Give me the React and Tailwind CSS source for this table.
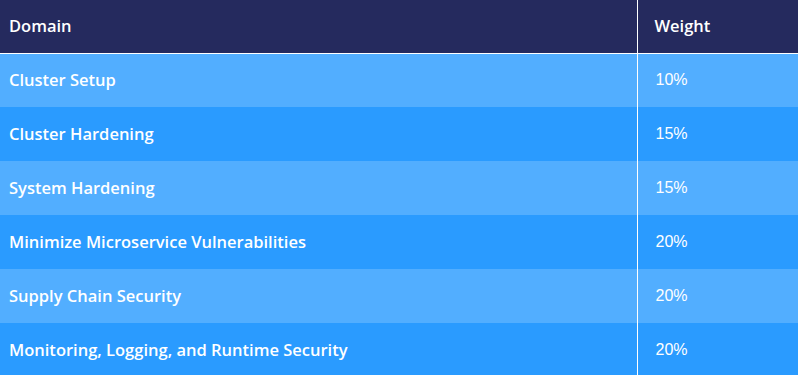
import React from "react";

const rows = [
  { domain: "Cluster Setup", weight: "10%" },
  { domain: "Cluster Hardening", weight: "15%" },
  { domain: "System Hardening", weight: "15%" },
  { domain: "Minimize Microservice Vulnerabilities", weight: "20%" },
  { domain: "Supply Chain Security", weight: "20%" },
  { domain: "Monitoring, Logging, and Runtime Security", weight: "20%" },
];

export default function App() {
  return (
    <div className="h-[375px] w-[798px] overflow-hidden bg-white font-['Open_Sans',sans-serif] text-white">
      <table className="w-full border-collapse">
        <thead>
          <tr className="h-[53px] border-b border-white bg-[#252a5e]">
            <th className="w-[637px] border-r border-white pl-[9px] text-left text-[16.5px] font-semibold">
              Domain
            </th>
            <th className="pl-[17px] text-left text-[16.5px] font-semibold">Weight</th>
          </tr>
        </thead>
        <tbody>
          {rows.map((row, i) => (
            <tr
              key={row.domain}
              className={`h-[54px] ${i % 2 === 0 ? "bg-[#52aeff]" : "bg-[#2a9bff]"}`}
            >
              <td className="border-r border-white pl-[9px] text-[16.5px] font-semibold">
                {row.domain}
              </td>
              <td className="pl-[18px] font-['Liberation_Sans',sans-serif] text-base">
                {row.weight}
              </td>
            </tr>
          ))}
        </tbody>
      </table>
    </div>
  );
}
